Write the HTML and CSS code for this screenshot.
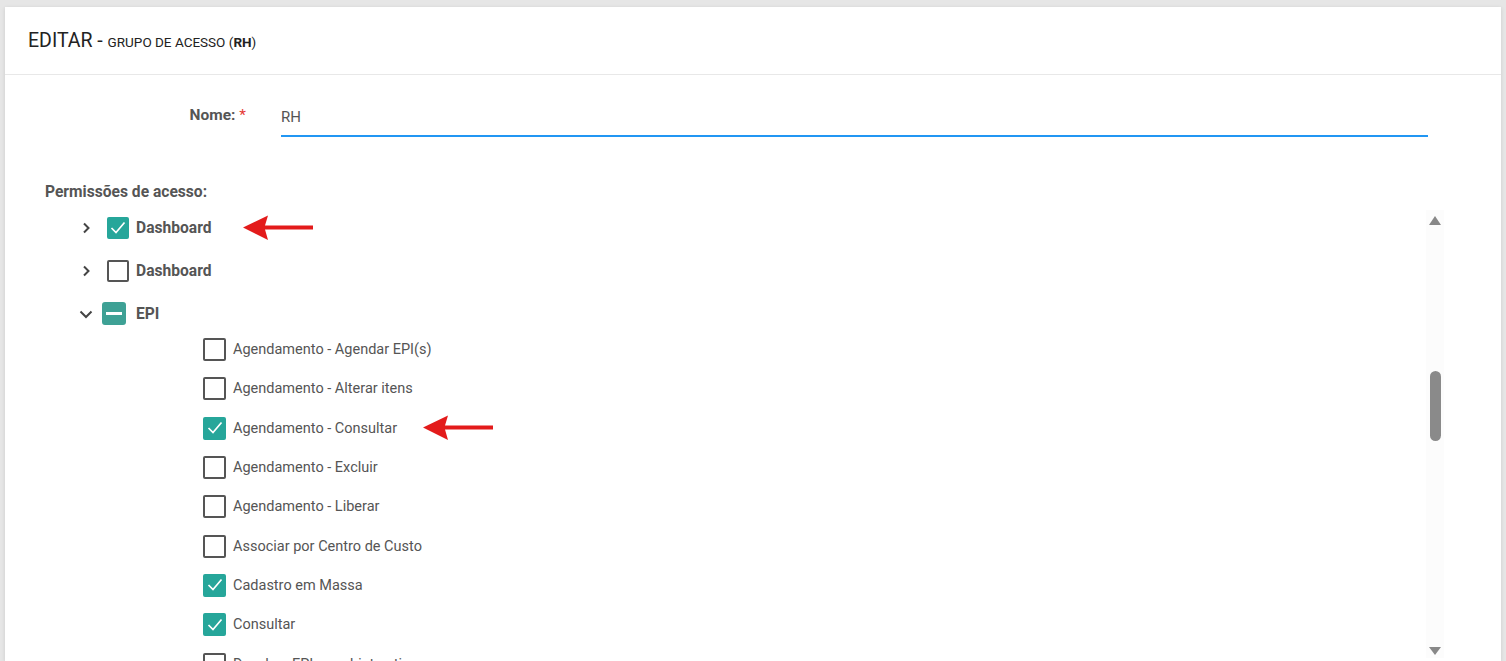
FILE: index.html
```html
<!DOCTYPE html>
<html lang="pt">
<head>
<meta charset="utf-8">
<title>Editar grupo de acesso</title>
<link rel="stylesheet" href="styles.css">
</head>
<body>
<div class="card">
  <div class="card-header">
    <span class="title-main">EDITAR - </span><span class="title-sub">GRUPO DE ACESSO (<b>RH</b>)</span>
  </div>
  <div class="card-body">
    <div class="form-row">
      <label class="form-label">Nome: <span class="req">*</span></label>
      <div class="input">RH</div>
    </div>
    <div class="perm-title">Permissões de acesso:</div>
    <div class="tree-wrap">
      <div class="tree">
        <div class="root-row">
          <span class="chev"><svg width="12" height="12" viewBox="0 0 12 12"><path d="M4 1.5 L8.5 6 L4 10.5" fill="none" stroke="#444" stroke-width="2"/></svg></span>
          <span class="cb cb-root checked"><svg viewBox="0 0 22 22" width="22" height="22"><path d="M4.5 11 L9 15.5 L17.5 5.5" fill="none" stroke="#fff" stroke-width="1.7"/></svg></span>
          <span class="root-label">Dashboard</span>
          <span class="arrow arrow-1"><svg width="72" height="26" viewBox="0 0 72 26"><path d="M0 12.5 L25 0.5 L22 10.5 L70 10.5 L70 14.5 L22 14.5 L25 25 Z" fill="#e31b1b"/></svg></span>
        </div>
        <div class="root-row">
          <span class="chev"><svg width="12" height="12" viewBox="0 0 12 12"><path d="M4 1.5 L8.5 6 L4 10.5" fill="none" stroke="#444" stroke-width="2"/></svg></span>
          <span class="cb cb-root"></span>
          <span class="root-label">Dashboard</span>
        </div>
        <div class="root-row">
          <span class="chev"><svg width="14" height="12" viewBox="0 0 14 12"><path d="M1.5 3.5 L7 9 L12.5 3.5" fill="none" stroke="#444" stroke-width="2"/></svg></span>
          <span class="cb cb-indet"><span class="dash"></span></span>
          <span class="root-label">EPI</span>
        </div>
        <div class="children">
          <div class="child-row"><span class="cb cb-child"></span><span class="child-label">Agendamento - Agendar EPI(s)</span></div>
          <div class="child-row"><span class="cb cb-child"></span><span class="child-label">Agendamento - Alterar itens</span></div>
          <div class="child-row"><span class="cb cb-child checked"><svg viewBox="0 0 22 22" width="22" height="22"><path d="M4.5 11 L9 15.5 L17.5 5.5" fill="none" stroke="#fff" stroke-width="1.7"/></svg></span><span class="child-label">Agendamento - Consultar</span>
            <span class="arrow arrow-2"><svg width="72" height="26" viewBox="0 0 72 26"><path d="M0 12.5 L25 0.5 L22 10.5 L70 10.5 L70 14.5 L22 14.5 L25 25 Z" fill="#e31b1b"/></svg></span>
          </div>
          <div class="child-row"><span class="cb cb-child"></span><span class="child-label">Agendamento - Excluir</span></div>
          <div class="child-row"><span class="cb cb-child"></span><span class="child-label">Agendamento - Liberar</span></div>
          <div class="child-row"><span class="cb cb-child"></span><span class="child-label">Associar por Centro de Custo</span></div>
          <div class="child-row"><span class="cb cb-child checked"><svg viewBox="0 0 22 22" width="22" height="22"><path d="M4.5 11 L9 15.5 L17.5 5.5" fill="none" stroke="#fff" stroke-width="1.7"/></svg></span><span class="child-label">Cadastro em Massa</span></div>
          <div class="child-row"><span class="cb cb-child checked"><svg viewBox="0 0 22 22" width="22" height="22"><path d="M4.5 11 L9 15.5 L17.5 5.5" fill="none" stroke="#fff" stroke-width="1.7"/></svg></span><span class="child-label">Consultar</span></div>
          <div class="child-row"><span class="cb cb-child"></span><span class="child-label">Devolver EPI por objeto ativo</span></div>
        </div>
      </div>
      <div class="scrollbar">
        <span class="sb-up"></span>
        <span class="sb-thumb"></span>
        <span class="sb-fill"></span>
        <span class="sb-down"></span>
      </div>
    </div>
  </div>
</div>
</body>
</html>
```
FILE: styles.css
```css
html, body {
  margin: 0;
  padding: 0;
  height: 661px;
  overflow: hidden;
}
body {
  background: #e6e6e6;
  font-family: Roboto, "Liberation Sans", sans-serif;
  color: #555;
}
.card {
  margin: 7px 5px 0 5px;
  background: #fff;
  box-shadow: 0 1px 4px rgba(0,0,0,0.12);
  height: 654px;
  overflow: hidden;
}
.card-header {
  height: 68px;
  box-sizing: border-box;
  border-bottom: 1px solid #e8e8e8;
  padding: 22px 0 0 23px;
  color: #222;
}
.title-main {
  font-size: 19.5px;
}
.title-sub {
  font-size: 13.5px;
}
.title-sub b {
  font-weight: 700;
}
.card-body {
  padding-top: 21px;
}
.form-row {
  display: flex;
  align-items: flex-start;
  height: 41px;
}
.form-label {
  width: 242px;
  text-align: right;
  font-weight: 700;
  font-size: 15.5px;
  color: #555;
  padding-top: 10px;
  box-sizing: border-box;
  padding-right: 1px;
}
.req {
  color: #e53935;
  font-weight: 400;
}
.input {
  margin-left: 34px;
  width: 1147px;
  height: 41px;
  box-sizing: border-box;
  border-bottom: 2px solid #2196f3;
  font-size: 15px;
  color: #555;
  padding-top: 12px;
}
.perm-title {
  margin: 46px 0 0 40px;
  font-size: 15.6px;
  font-weight: 700;
  color: #555;
  line-height: 18px;
}
.tree-wrap {
  display: flex;
  margin-top: 0;
}
.tree {
  flex: 1;
  padding-top: 5px;
}
.root-row {
  position: relative;
  display: flex;
  align-items: center;
  height: 43px;
  padding-left: 70px;
}
.chev {
  width: 22px;
  display: flex;
  justify-content: center;
  align-items: center;
}
.cb {
  box-sizing: border-box;
  display: inline-flex;
  align-items: center;
  justify-content: center;
  border: 2px solid #555;
  border-radius: 2px;
  background: #fff;
  flex: none;
}
.cb.checked {
  background: #26a69a;
  border-color: #26a69a;
}
.cb svg {
  flex: none;
}
.cb-root {
  width: 22px;
  height: 22px;
  margin-left: 10px;
}
.cb-indet {
  width: 24px;
  height: 23px;
  margin-left: 5px;
  margin-right: 1px;
  background: #3ea195;
  border-color: #3ea195;
  border-radius: 3px;
}
.dash {
  width: 16px;
  height: 3px;
  background: #fff;
}
.root-label {
  margin-left: 7px;
  font-weight: 700;
  font-size: 15.6px;
  color: #555;
}
.cb-indet + .root-label {
  margin-left: 9px;
}
.children {
  margin-top: -5px;
}
.child-row {
  position: relative;
  display: flex;
  align-items: center;
  height: 39.3px;
  padding-left: 198px;
}
.cb-child {
  width: 23px;
  height: 23px;
}
.child-label {
  margin-left: 7px;
  font-size: 14.5px;
  color: #555;
}
.arrow {
  position: absolute;
  top: 50%;
  margin-top: -13px;
  line-height: 0;
}
.arrow-1 {
  left: 238px;
}
.arrow-2 {
  left: 418px;
}
.scrollbar {
  width: 18px;
  margin-right: 57px;
  height: 448px;
  margin-top: 9px;
  background: #fcfcfc;
  display: flex;
  flex-direction: column;
  align-items: center;
}
.sb-up {
  margin-top: 6px;
  width: 0;
  height: 0;
  border-left: 6px solid transparent;
  border-right: 6px solid transparent;
  border-bottom: 9px solid #888;
}
.sb-thumb {
  margin-top: 146px;
  width: 11px;
  height: 70px;
  border-radius: 5.5px;
  background: #8a8a8a;
}
.sb-fill {
  flex: 1;
}
.sb-down {
  margin-bottom: 3px;
  width: 0;
  height: 0;
  border-left: 6px solid transparent;
  border-right: 6px solid transparent;
  border-top: 8px solid #888;
}
```
